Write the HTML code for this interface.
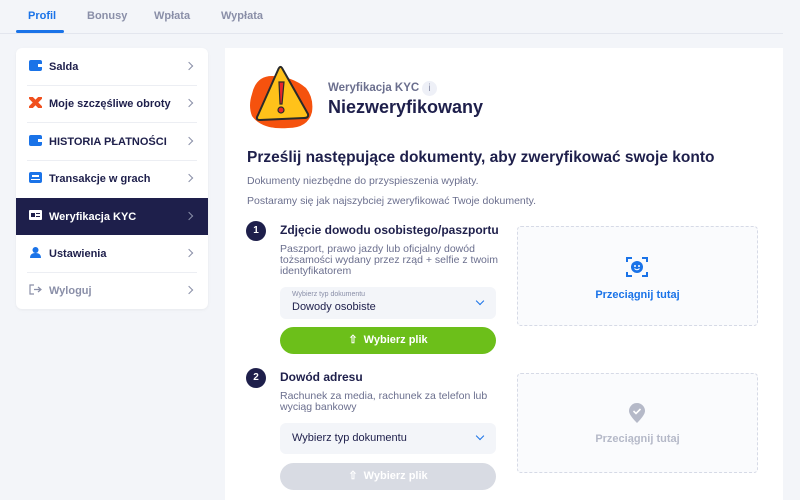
<!DOCTYPE html>
<html><head><meta charset="utf-8"><style>
*{margin:0;padding:0;box-sizing:border-box}
body{width:800px;height:500px;overflow:hidden;background:#f3f5f9;font-family:"Liberation Sans",sans-serif;position:relative;color:#1e1f4b}
.a{position:absolute}
.tab{position:absolute;top:10px;font-size:11px;font-weight:bold;color:#8a8fa8}
.side{left:16px;top:48px;width:192px;height:261px;background:#fff;border-radius:6px;box-shadow:0 1px 3px rgba(0,0,0,.05);overflow:hidden}
.row{position:absolute;left:0;width:192px;height:37px;font-size:11px;font-weight:bold;color:#1e1f4b;display:flex;align-items:center;padding-left:33px}
.row .ic{position:absolute;left:13px;top:12px;width:13px;height:11px}
.row .ch{position:absolute;right:16px;top:15px;width:6px;height:6px;border-right:1.3px solid #8a8fa8;border-top:1.3px solid #8a8fa8;transform:rotate(45deg)}
.sep{position:absolute;left:11px;width:170px;height:1px;background:#eceef3}
.main{left:225px;top:48px;width:558px;height:452px;background:#fff}
.num{position:absolute;width:20px;height:20px;border-radius:50%;background:#1e1f4b;color:#fff;font-size:10px;font-weight:bold;text-align:center;line-height:20px}
.t{position:absolute;font-size:12px;font-weight:bold;color:#1e1f4b}
.d{position:absolute;font-size:10.5px;line-height:11px;color:#6b6f8e}
.sel{position:absolute;left:280px;width:216px;background:#f3f5f9;border-radius:6px}
.btn{position:absolute;left:280px;width:216px;height:27px;border-radius:14px;color:#fff;font-size:11px;font-weight:bold;text-align:center;line-height:27px}
.dz{position:absolute;left:517px;width:241px;height:100px;border:1.5px dashed #d6dae6;border-radius:4px;background:#fafbfd;font-size:11px;font-weight:bold;text-align:center}
</style></head><body>
<div class="a" style="left:0;top:33px;width:783px;height:1px;background:#e3e6ee"></div>
<div class="tab" style="left:28px;color:#1a73e8">Profil</div>
<div class="a" style="left:16px;top:30px;width:48px;height:3px;background:#1a73e8;border-radius:2px"></div>
<div class="tab" style="left:87px">Bonusy</div>
<div class="tab" style="left:154px">Wpłata</div>
<div class="tab" style="left:221px">Wypłata</div>

<div class="a side">
 <div class="row" style="top:0"><svg class="ic" viewBox="0 0 13 11"><rect width="13" height="11" rx="2" fill="#1a73e8"/><rect x="9" y="4" width="4" height="3" fill="#fff"/></svg>Salda<span class="ch"></span></div>
 <div class="sep" style="top:37px"></div>
 <div class="row" style="top:37px"><svg class="ic" viewBox="0 0 13 11"><path d="M2 1L11 10M11 1L2 10" stroke="#f0501e" stroke-width="4" stroke-linecap="round"/></svg>Moje szczęśliwe obroty<span class="ch"></span></div>
 <div class="sep" style="top:74px"></div>
 <div class="row" style="top:75px"><svg class="ic" viewBox="0 0 13 11"><rect width="13" height="11" rx="2" fill="#1a73e8"/><rect x="9" y="4" width="4" height="3" fill="#fff"/></svg>HISTORIA PŁATNOŚCI<span class="ch"></span></div>
 <div class="sep" style="top:112px"></div>
 <div class="row" style="top:112px"><svg class="ic" viewBox="0 0 13 11"><rect width="13" height="11" rx="2" fill="#1a73e8"/><rect x="3" y="3" width="7" height="2" fill="#fff"/><rect x="2" y="7" width="9" height="1" fill="#fff"/></svg>Transakcje w grach<span class="ch"></span></div>
 <div class="row" style="top:150px;background:#1e1f4b;color:#fff"><svg class="ic" viewBox="0 0 13 11"><rect width="13" height="10" rx="1" fill="#fff"/><rect x="2" y="3" width="4" height="4" fill="#1e1f4b"/><rect x="7" y="3" width="4" height="1" fill="#1e1f4b"/><rect x="7" y="6" width="4" height="1" fill="#1e1f4b"/></svg>Weryfikacja KYC<span class="ch" style="border-color:#8a8fa8"></span></div>
 <div class="row" style="top:187px"><svg class="ic" viewBox="0 0 13 11"><circle cx="6.5" cy="3" r="3" fill="#1a73e8"/><path d="M1 11Q1 6 6.5 6Q12 6 12 11Z" fill="#1a73e8"/></svg>Ustawienia<span class="ch"></span></div>
 <div class="sep" style="top:224px"></div>
 <div class="row" style="top:224px;color:#8a8fa8"><svg class="ic" viewBox="0 0 13 11"><path d="M5 1H1V10H5M5 5.5H12M9 3L12 5.5L9 8" fill="none" stroke="#8a8fa8" stroke-width="1.2"/></svg>Wyloguj<span class="ch"></span></div>
</div>

<div class="a main"></div>
<svg class="a" style="left:248px;top:64px" width="68" height="66" viewBox="0 0 68 66"><path d="M4 30Q8 12 24 12Q44 12 58 24Q66 34 64 48Q60 64 40 64Q14 66 4 52Q0 42 4 30Z" fill="#f5520e"/><path d="M34 4L60 50Q61 54 56 54L12 56Q7 56 10 51L30 6Q32 1 34 4Z" fill="#ffc21a" stroke="#2a2a2a" stroke-width="2" stroke-linejoin="round"/><path d="M31 18L36 18L34 40L32 40Z" fill="#e8242a" stroke="#2a2a2a" stroke-width="1.2"/><circle cx="33" cy="46" r="3" fill="#e8242a" stroke="#2a2a2a" stroke-width="1.2"/></svg>
<div class="a" style="left:328px;top:82px;font-size:11.5px;font-weight:bold;color:#6b6f8e">Weryfikacja KYC</div>
<div class="a" style="left:422px;top:81px;width:15px;height:15px;border-radius:50%;background:#eef0f7;color:#8a8fa8;font-size:10px;text-align:center;line-height:15px">i</div>
<div class="a" style="left:328px;top:97px;font-size:18px;font-weight:bold;color:#1e1f4b">Niezweryfikowany</div>
<div class="a" style="left:247px;top:149px;font-size:15.5px;font-weight:bold;color:#1e1f4b">Prześlij następujące dokumenty, aby zweryfikować swoje konto</div>
<div class="d" style="left:247px;top:176px">Dokumenty niezbędne do przyspieszenia wypłaty.</div>
<div class="d" style="left:247px;top:196px">Postaramy się jak najszybciej zweryfikować Twoje dokumenty.</div>

<div class="num" style="left:246px;top:221px">1</div>
<div class="t" style="left:280px;top:223px">Zdjęcie dowodu osobistego/paszportu</div>
<div class="d" style="left:280px;top:244px;width:220px">Paszport, prawo jazdy lub oficjalny dowód tożsamości wydany przez rząd + selfie z twoim identyfikatorem</div>
<div class="sel" style="top:287px;height:32px"><div class="a" style="left:12px;top:4px;font-size:7px;color:#8a8fa8">Wybierz typ dokumentu</div><div class="a" style="left:12px;top:14px;font-size:11px;color:#1e1f4b">Dowody osobiste</div><div class="a" style="right:13px;top:11px;width:6px;height:6px;border-right:1.3px solid #1a73e8;border-bottom:1.3px solid #1a73e8;transform:rotate(45deg)"></div></div>
<div class="btn" style="top:327px;background:#6cbf1a">⇧&nbsp; Wybierz plik</div>
<div class="dz" style="top:226px;color:#1a73e8"><svg class="a" style="left:107px;top:28px" width="24" height="24" viewBox="0 0 24 24"><path d="M2 7V3H7M17 3H22V7M22 17V21H17M7 21H2V17" fill="none" stroke="#1a73e8" stroke-width="2"/><circle cx="12" cy="12" r="6" fill="#1a73e8"/><circle cx="10" cy="11" r="1" fill="#fff"/><circle cx="14" cy="11" r="1" fill="#fff"/><path d="M9.5 13.5Q12 16 14.5 13.5" stroke="#fff" fill="none"/></svg><div class="a" style="left:0;right:0;top:62px">Przeciągnij tutaj</div></div>

<div class="num" style="left:246px;top:368px">2</div>
<div class="t" style="left:280px;top:370px">Dowód adresu</div>
<div class="d" style="left:280px;top:391px;width:220px">Rachunek za media, rachunek za telefon lub wyciąg bankowy</div>
<div class="sel" style="top:423px;height:31px"><div class="a" style="left:12px;top:9px;font-size:11px;color:#1e1f4b">Wybierz typ dokumentu</div><div class="a" style="right:13px;top:10px;width:6px;height:6px;border-right:1.3px solid #1a73e8;border-bottom:1.3px solid #1a73e8;transform:rotate(45deg)"></div></div>
<div class="btn" style="top:463px;background:#d8dbe3">⇧&nbsp; Wybierz plik</div>
<div class="dz" style="top:373px;color:#b5b9c8"><svg class="a" style="left:110px;top:28px" width="18" height="22" viewBox="0 0 18 22"><path d="M9 21Q1 13 1 9A8 8 0 0 1 17 9Q17 13 9 21Z" fill="#b5b9c8"/><path d="M5.5 9L8 11.5L12.5 7" stroke="#fff" stroke-width="1.6" fill="none"/></svg><div class="a" style="left:0;right:0;top:59px">Przeciągnij tutaj</div></div>
</body></html>
